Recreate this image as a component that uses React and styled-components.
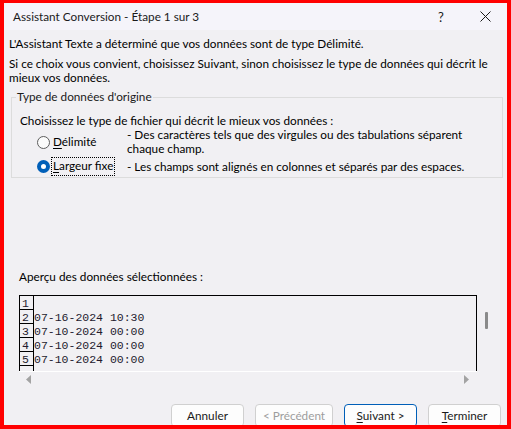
import React from "react";
import styled, { createGlobalStyle } from "styled-components";

const uiFont = `Lato, "Noto Sans", sans-serif`;
const monoFont = `"Liberation Mono", "Courier New", monospace`;
const bodyBg = "#f1f0f3";

const GlobalStyle = createGlobalStyle`
  html, body {
    margin: 0;
    padding: 0;
    background: #ff0000;
  }
  * {
    box-sizing: border-box;
  }
`;

const Frame = styled.div`
  width: 511px;
  height: 429px;
  border-style: solid;
  border-color: #ff0000;
  border-width: 3px 4px 4px 4px;
  background: ${bodyBg};
  overflow: hidden;
  display: flex;
  flex-direction: column;
  font-family: ${uiFont};
  font-size: 11.75px;
  color: #000;
`;

const TitleBar = styled.div`
  height: 27px;
  flex: none;
  display: flex;
  align-items: center;
  background: #f5f4fa;
  padding-left: 9px;
`;

const TitleText = styled.div`
  flex: 1;
  line-height: 14px;
  color: #1a1a1a;
`;

const TitleButton = styled.div`
  width: 44px;
  height: 27px;
  display: flex;
  align-items: center;
  justify-content: center;
  font-size: 13px;
  color: #1a1a1a;
`;

const Content = styled.div`
  flex: 1;
  display: flex;
  flex-direction: column;
  padding: 0 4px 0 5px;
`;

const Para = styled.p`
  margin: ${(p) => p.$top || 0}px 0 0 0;
  line-height: 14px;
`;

const Group = styled.fieldset`
  margin: 5px 0 0 2px;
  padding: 0 8px 2px 8px;
  border: 1px solid #dcdcdc;
  min-width: 0;
`;

const Legend = styled.legend`
  padding: 0 1px;
  margin-left: -4px;
  line-height: 14px;
  color: #1a1a1a;
`;

const GroupIntro = styled.div`
  margin-top: 10px;
  line-height: 14px;
`;

const Options = styled.div`
  display: grid;
  grid-template-columns: 17px 73px 345px;
  row-gap: 2px;
  padding-left: 17px;
`;

const RadioCell = styled.div`
  display: flex;
  align-items: center;
`;

const RadioCircle = styled.span`
  width: 13px;
  height: 13px;
  border-radius: 50%;
  background: ${(p) => (p.$checked ? "#ffffff" : "#fbfbfb")};
  border: ${(p) => (p.$checked ? "4px solid #005fb8" : "1px solid #5d5d5d")};
`;

const LabelCell = styled.div`
  display: flex;
  align-items: center;
`;

const OptionLabel = styled.span`
  line-height: 14px;
  padding: 1px 1px 2px 1px;
  margin-left: -2px;
  outline: ${(p) => (p.$focused ? "1px dotted #000" : "none")};
  u {
    text-decoration: underline;
    text-underline-offset: 2px;
  }
`;

const Description = styled.div`
  line-height: 14px;
  white-space: ${(p) => (p.$single ? "nowrap" : "normal")};
  display: flex;
  align-items: center;
`;

const PreviewLabel = styled.div`
  margin: 92px 0 0 10px;
  line-height: 14px;
`;

const Preview = styled.div`
  margin: 11px 0 0 10px;
  display: grid;
  grid-template-columns: 458px 1fr;
  grid-template-rows: 76px 16px;
`;

const DataBox = styled.div`
  border: 1px solid #000;
  border-bottom: none;
  overflow: hidden;
`;

const DataRow = styled.div`
  display: flex;
  height: 14px;
  font-family: ${monoFont};
  font-size: 11.5px;
  color: #231a2e;
`;

const RowNum = styled.div`
  width: 14px;
  flex: none;
  border-right: 1px solid #000;
  border-bottom: 1px solid #000;
  padding-left: 2px;
  line-height: 15px;
`;

const RowData = styled.div`
  line-height: 15px;
  white-space: pre;
`;

const VScroll = styled.div`
  display: flex;
`;

const VThumb = styled.div`
  margin: 17px 0 0 8px;
  width: 3px;
  height: 17px;
  background: #8a8a8a;
  border-radius: 1px;
`;

const HScroll = styled.div`
  border-top: 1px solid #ffffff;
  display: flex;
  align-items: center;
  justify-content: space-between;
  padding: 0 6px 0 6px;
`;

const Buttons = styled.div`
  margin-top: auto;
  display: flex;
  justify-content: flex-end;
  gap: 11px;
  padding-right: 2px;
  margin-bottom: -2px;
`;

const Button = styled.div`
  width: ${(p) => (p.$wide ? 78 : 73)}px;
  height: 23px;
  display: flex;
  align-items: center;
  justify-content: center;
  background: #fdfdfd;
  border: 1px solid ${(p) => (p.$primary ? "#005fb8" : "#d0d0d0")};
  border-radius: 4px;
  color: ${(p) => (p.$disabled ? "#9d9d9d" : "#1a1a1a")};
  u {
    text-underline-offset: 2px;
  }
`;

function Arrow({ dir }) {
  const pts = dir === "left" ? "6,0 6,9 1,4.5" : "0,0 0,9 5,4.5";
  return (
    <svg width="7" height="9" viewBox="0 0 7 9">
      <polygon points={pts} fill="#a3a3a3" />
    </svg>
  );
}

const rows = [
  ["1", ""],
  ["2", "07-16-2024 10:30"],
  ["3", "07-10-2024 00:00"],
  ["4", "07-10-2024 00:00"],
  ["5", "07-10-2024 00:00"],
  ["", ""],
];

export default function App() {
  return (
    <>
      <GlobalStyle />
      <Frame>
        <TitleBar>
          <TitleText>Assistant Conversion - Étape 1 sur 3</TitleText>
          <TitleButton>?</TitleButton>
          <TitleButton>
            <svg width="11" height="11" viewBox="0 0 11 11">
              <path d="M0.5 0.5 L10.5 10.5 M10.5 0.5 L0.5 10.5" stroke="#1a1a1a" strokeWidth="1" />
            </svg>
          </TitleButton>
        </TitleBar>
        <Content>
          <Para $top={7}>L'Assistant Texte a déterminé que vos données sont de type Délimité.</Para>
          <Para $top={6}>
            Si ce choix vous convient, choisissez Suivant, sinon choisissez le type de données qui décrit le
            mieux vos données.
          </Para>
          <Group>
            <Legend>Type de données d'origine</Legend>
            <GroupIntro>Choisissez le type de fichier qui décrit le mieux vos données :</GroupIntro>
            <Options>
              <RadioCell>
                <RadioCircle />
              </RadioCell>
              <LabelCell>
                <OptionLabel>
                  <u>D</u>élimité
                </OptionLabel>
              </LabelCell>
              <Description>
                - Des caractères tels que des virgules ou des tabulations séparent chaque champ.
              </Description>
              <RadioCell>
                <RadioCircle $checked />
              </RadioCell>
              <LabelCell>
                <OptionLabel $focused>
                  <u>L</u>argeur fixe
                </OptionLabel>
              </LabelCell>
              <Description $single>- Les champs sont alignés en colonnes et séparés par des espaces.</Description>
            </Options>
          </Group>
          <PreviewLabel>Aperçu des données sélectionnées :</PreviewLabel>
          <Preview>
            <DataBox>
              {rows.map(([n, d], i) => (
                <DataRow key={i}>
                  <RowNum>{n}</RowNum>
                  <RowData>{d}</RowData>
                </DataRow>
              ))}
            </DataBox>
            <VScroll>
              <VThumb />
            </VScroll>
            <HScroll>
              <Arrow dir="left" />
              <Arrow dir="right" />
            </HScroll>
          </Preview>
          <Buttons>
            <Button>Annuler</Button>
            <Button $disabled $wide>
              &lt; Précédent
            </Button>
            <Button $primary>
              <span>
                <u>S</u>uivant &gt;
              </span>
            </Button>
            <Button>
              <span>
                <u>T</u>erminer
              </span>
            </Button>
          </Buttons>
        </Content>
      </Frame>
    </>
  );
}
